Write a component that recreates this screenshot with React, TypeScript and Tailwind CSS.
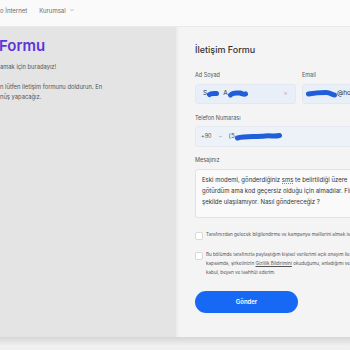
import React from 'react';

const Scribble: React.FC<{ w: number; d: string }> = ({ w, d }) => (
  <svg width={w} height={10} viewBox={`0 0 ${w} 10`} className="inline-block align-middle shrink-0">
    <path d={d} stroke="#1f5fd9" strokeWidth={5} fill="none" strokeLinecap="round" strokeLinejoin="round" />
  </svg>
);

const Label: React.FC<{ children: React.ReactNode }> = ({ children }) => (
  <div className="text-[5.5px] text-[#555] leading-none mb-[5px]">{children}</div>
);

const Checkbox: React.FC = () => (
  <span className="w-[8px] h-[8px] shrink-0 rounded-[2px] border border-[#d9d9d9] bg-white" />
);

export default function App() {
  return (
    <div className="w-[350px] h-[350px] overflow-hidden bg-[#f0f0f0] font-['Inter',sans-serif]">
      {/* top nav */}
      <div className="h-[27px] bg-[#fafafa] border-b border-[#e9e9e9] flex items-center pb-[6px] gap-[12px] text-[6px] text-[#6a6a6a]">
        <span>o İnternet</span>
        <span className="flex items-center gap-[3px]">
          Kurumsal
          <svg width="6" height="6" viewBox="0 0 24 24" fill="none" stroke="#8a8a8a" strokeWidth="2.5">
            <path d="M6 9l6 6 6-6" />
          </svg>
        </span>
      </div>

      <div className="flex h-[310px]">
        {/* left intro */}
        <div className="w-[176px] shrink-0 bg-[#e4e4e4] pt-[9px]">
          <div className="text-[15px] font-semibold text-[#5c35d8] leading-[20px] -ml-[1px]">Formu</div>
          <p className="text-[5.8px] text-[#555] mt-[6px] leading-[9px]">amak için buradayız!</p>
          <p className="text-[5.8px] text-[#555] mt-[11px] leading-[10px]">
            n lütfen iletişim formunu doldurun. En
            <br />
            nüş yapacağız.
          </p>
        </div>

        {/* form card */}
        <div className="w-[250px] shrink-0 bg-[#f4f4f4] border-l-[2px] border-[#ededed] pl-[17px] pt-[17px]">
          <h2 className="text-[9px] font-medium text-[#333] leading-[12px]">İletişim Formu</h2>

          <div className="flex gap-[6px] mt-[17px]">
            <div className="w-[101px]">
              <Label>Ad Soyad</Label>
              <div className="h-[20px] rounded-[3px] bg-[#e9eff9] border border-[#e3e8f0] flex items-center px-[7px] text-[6.5px] text-[#333]">
                <span>S</span>
                <Scribble w={12} d="M2.5 5.5 C4 4 7 4.5 9.5 4.5" />
                <span className="ml-[4px]">A</span>
                <Scribble w={20} d="M2.5 6 C5 3 9 4 12 4 C14 4.5 16 6 17.5 5" />
                <span className="ml-auto text-[#bbb] text-[7px]">×</span>
              </div>
            </div>
            <div className="w-[101px]">
              <Label>Email</Label>
              <div className="h-[20px] rounded-[3px] bg-[#e9eff9] border border-[#e3e8f0] flex items-center pl-[3px] text-[6.5px] text-[#333]">
                <Scribble w={31} d="M2.5 5 C8 4 14 3.5 20 3.5 C24 3.5 27 6 28.5 6" />
                <span>@hotmail.com</span>
              </div>
            </div>
          </div>

          <div className="mt-[12px] w-[208px]">
            <Label>Telefon Numarası</Label>
            <div className="h-[21px] rounded-[3px] bg-[#edf1f8] border border-[#e6e9ef] flex items-center px-[5px] text-[6.5px] text-[#333]">
              <span className="text-[#555] text-[5.5px]">+90</span>
              <svg className="ml-[6px]" width="5" height="5" viewBox="0 0 24 24" fill="none" stroke="#777" strokeWidth="2.5">
                <path d="M6 9l6 6 6-6" />
              </svg>
              <span className="ml-[6px] text-[#555]">(5</span>
              <Scribble w={47} d="M2.5 6 C10 4 20 5 30 4 C36 3.5 40 4.5 44.5 3.5" />
            </div>
          </div>

          <div className="mt-[11px] w-[208px]">
            <Label>Mesajınız</Label>
            <div className="h-[49px] rounded-[3px] bg-[#fafafa] border border-[#e2e2e2] px-[6px] pt-[4px] text-[6px] leading-[11px] text-[#333] whitespace-nowrap">
              Eski modemi, gönderdiğiniz{' '}
              <span className="inline-block leading-[6px] border-b border-dotted border-[#e06060]">sms</span> te belirtildiği üzere
              <br />
              götürdüm ama kod geçersiz olduğu için almadılar. Firma
              <br />
              şekilde ulaşılamıyor. Nasıl göndereceğiz ?
            </div>
          </div>

          <div className="mt-[14px] flex items-center gap-[3px] text-[4.6px] text-[#555] whitespace-nowrap">
            <Checkbox />
            <span>Tarafınızdan gelecek bilgilendirme ve kampanya maillerini almak istiyorum.</span>
          </div>

          <div className="mt-[12px] flex items-start gap-[3px] text-[4.6px] leading-[9px] text-[#555] whitespace-nowrap">
            <Checkbox />
            <span className="-mt-[2px]">
              Bu bölümde tarafınızla paylaştığım kişisel verilerimi açık onayım ile işlenmesine
              <br />
              kapsamda, şirketinizin <span className="underline">Gizlilik Bildirimini</span> okuduğumu, anladığımı ve
              <br />
              kabul, beyan ve taahhüt ederim.
            </span>
          </div>

          <button className="mt-[14px] w-[103px] h-[22px] rounded-full bg-[#1769f5] text-white text-[6px] font-semibold">
            Gönder
          </button>
        </div>
      </div>

      <div className="h-[8px] bg-gradient-to-b from-[#d6d6d6] to-[#eeeeee]" />
    </div>
  );
}
